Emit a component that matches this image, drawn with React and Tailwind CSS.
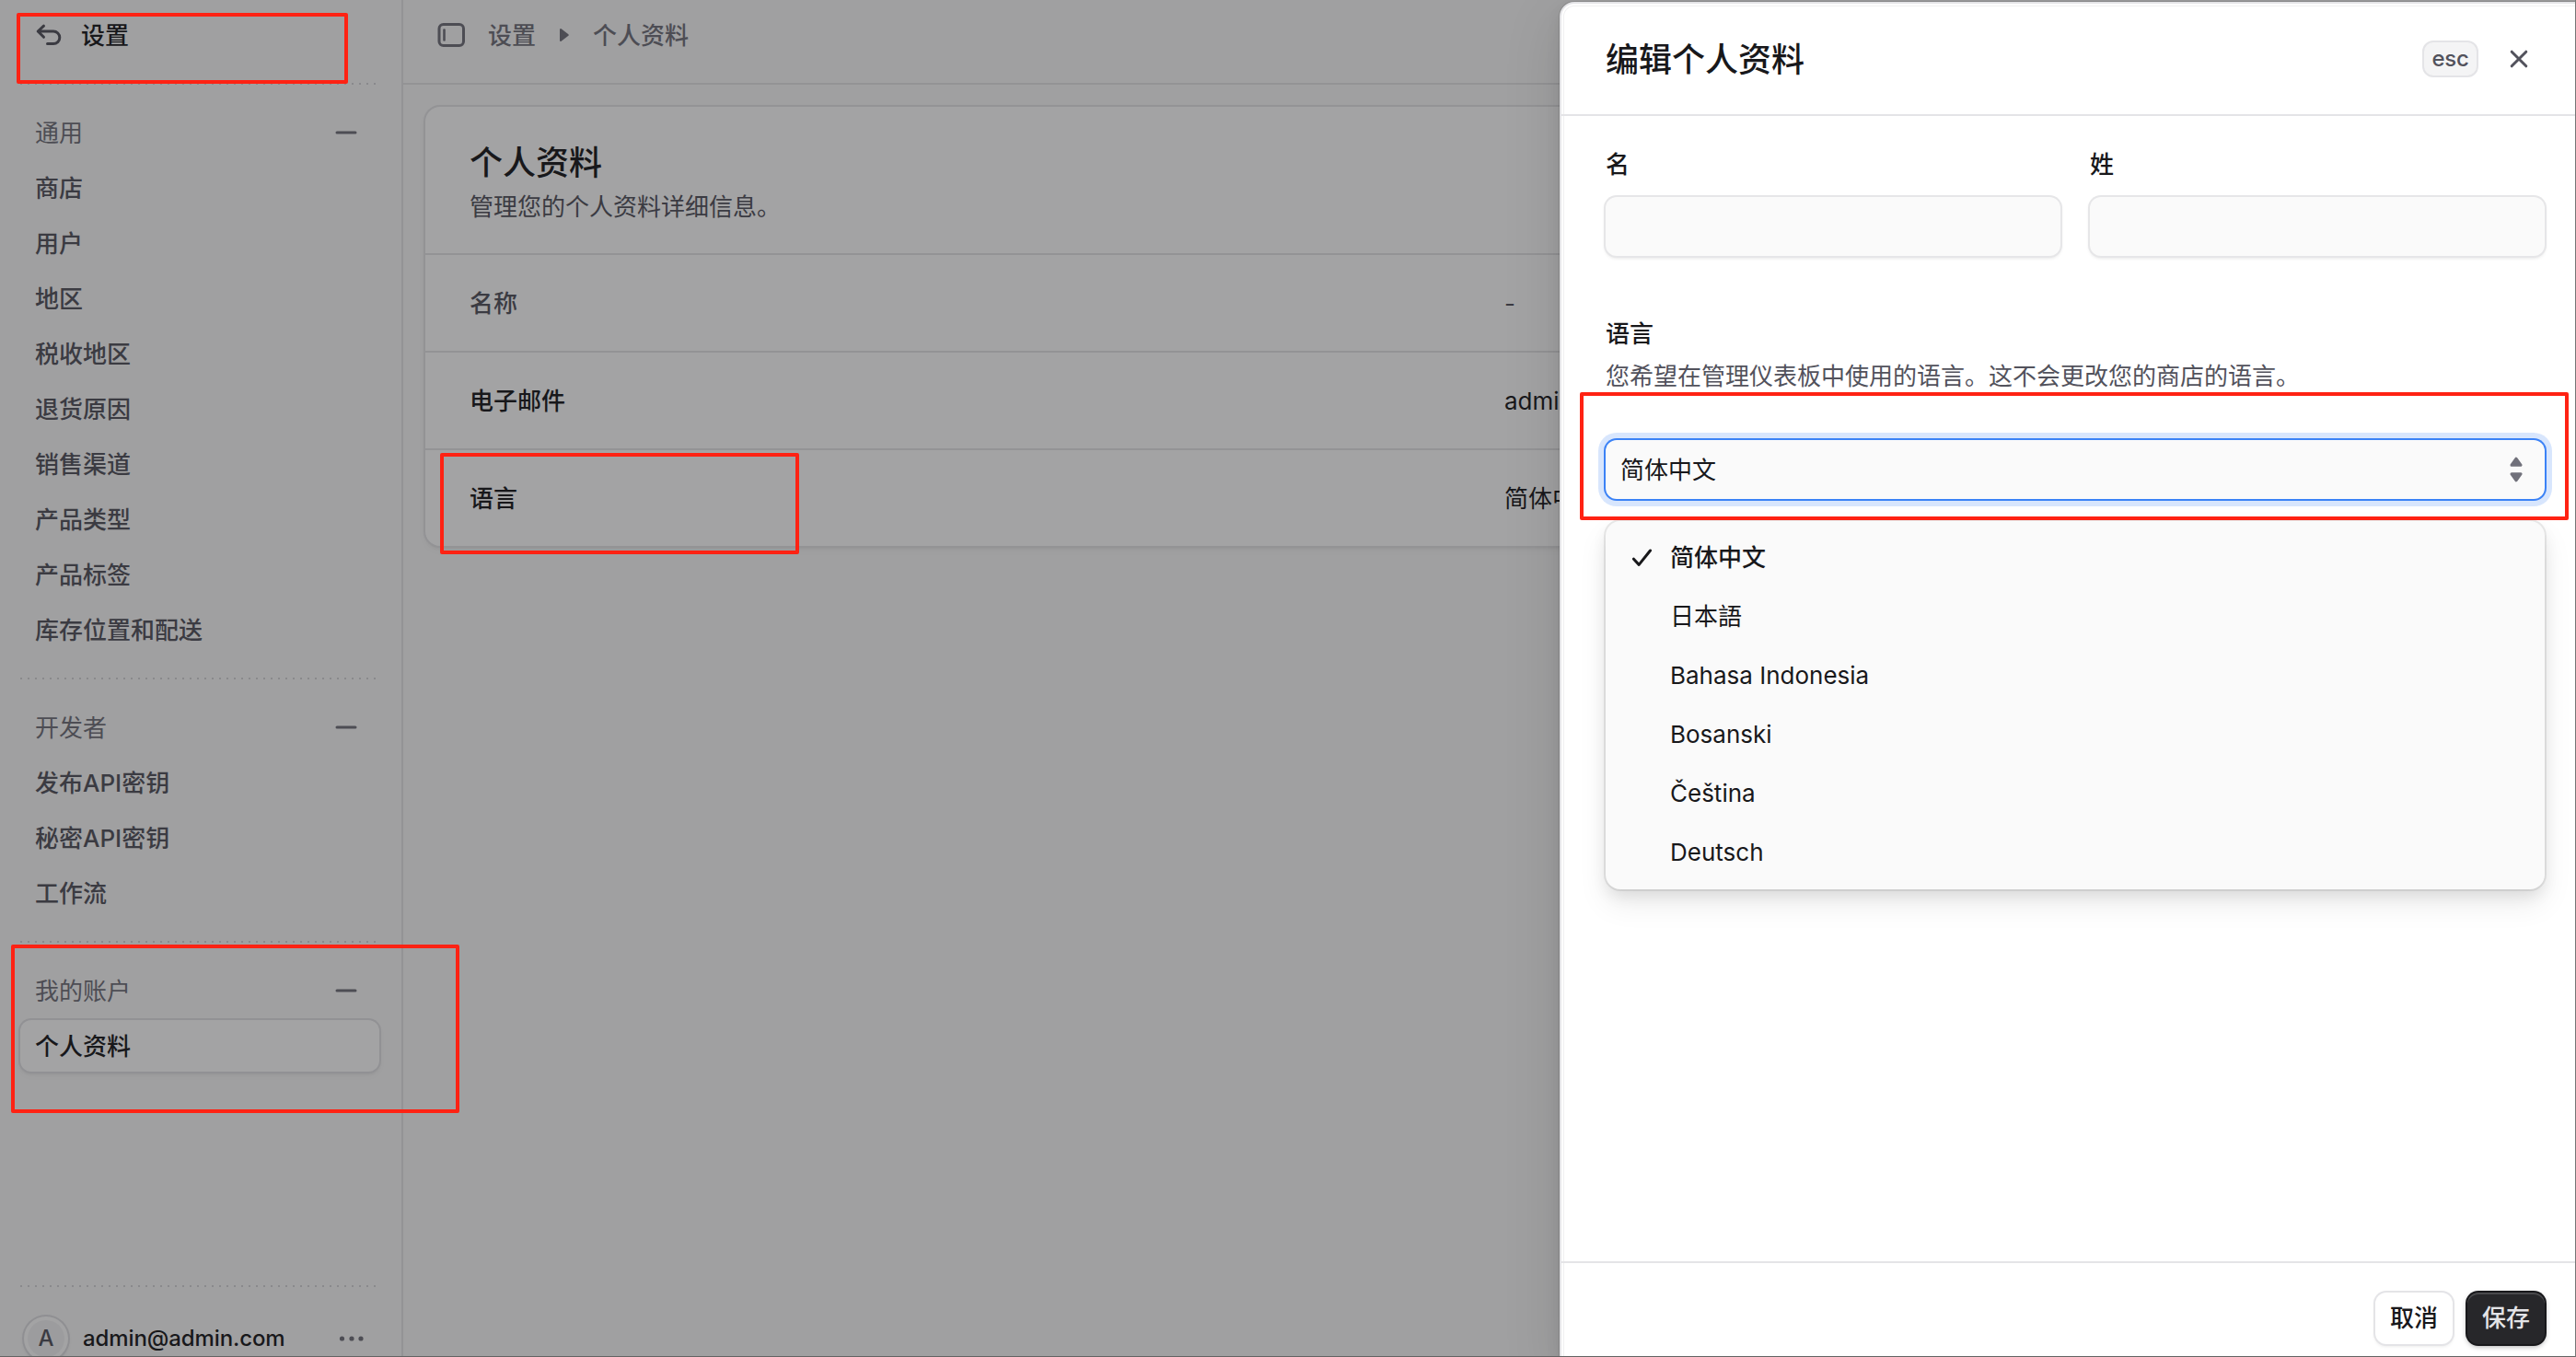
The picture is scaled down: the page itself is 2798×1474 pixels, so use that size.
import React, { useState } from "react";
import clsx from "clsx";

const generalItems = ["商店", "用户", "地区", "税收地区", "退货原因", "销售渠道", "产品类型", "产品标签", "库存位置和配送"];
const developerItems = ["发布API密钥", "秘密API密钥", "工作流"];
const accountItems = ["个人资料"];

const profileRows = [
  { label: "名称", value: "-", muted: true },
  { label: "电子邮件", value: "admin@admin.com" },
  { label: "语言", value: "简体中文" },
];

const languages = ["简体中文", "日本語", "Bahasa Indonesia", "Bosanski", "Čeština", "Deutsch"];

function UndoIcon() {
  return (
    <svg width="28" height="24" viewBox="0 0 28 24" fill="none" stroke="currentColor" strokeWidth="3" strokeLinecap="round" strokeLinejoin="round">
      <path d="M8.5 2.2 2.2 8l6.3 6.3M2.2 8H19a6.8 6.8 0 0 1 0 13.6h-6.5" />
    </svg>
  );
}

function SidebarIcon() {
  return (
    <svg width="32" height="28" viewBox="0 0 32 28" fill="none" stroke="currentColor" strokeWidth="3" strokeLinecap="round">
      <rect x="3" y="2.5" width="26.5" height="23" rx="4.5" />
      <path d="M8.5 8.5v11" strokeWidth="2.6" />
    </svg>
  );
}

function DottedLine() {
  return <div className="h-0.5 w-[388px] shrink-0 bg-[linear-gradient(90deg,#d4d4d8_2px,transparent_2px)] bg-[length:8px_2px]" />;
}

function NavSection({ title, items, active }) {
  return (
    <div className="py-[22px]">
      <div className="flex h-[60px] items-center justify-between pl-4 pr-6 text-zinc-500">
        <span className="pt-0.5">{title}</span>
        <svg width="24" height="24" viewBox="0 0 24 24" stroke="currentColor" strokeWidth="3" strokeLinecap="round">
          <path d="M2 12h20" />
        </svg>
      </div>
      <div className="flex flex-col gap-1 py-0.5">
        {items.map((item) => (
          <div
            key={item}
            className={clsx(
              "flex h-14 items-center rounded-xl px-4 pt-0.5 font-medium",
              item === active
                ? "bg-white text-zinc-900 shadow-[0_0_0_2px_#e2e2e5,0_2px_4px_rgba(0,0,0,0.1),0_4px_10px_rgba(0,0,0,0.03)]"
                : "text-zinc-600"
            )}
          >
            {item}
          </div>
        ))}
      </div>
    </div>
  );
}

function Sidebar() {
  return (
    <aside className="flex h-[1510px] w-[438px] shrink-0 flex-col border-r-2 border-zinc-200 pl-[22px] pr-6">
      <div className="flex h-[90px] shrink-0 items-center gap-[21px] pb-[14px] pl-[17px] text-zinc-600">
        <UndoIcon />
        <span className="pt-0.5 font-medium text-zinc-900">设置</span>
      </div>
      <DottedLine />
      <NavSection title="通用" items={generalItems} />
      <DottedLine />
      <NavSection title="开发者" items={developerItems} />
      <DottedLine />
      <NavSection title="我的账户" items={accountItems} active="个人资料" />
      <div className="mt-auto">
        <DottedLine />
        <div className="flex h-28 items-center">
          <div className="ml-1 flex size-12 items-center justify-center rounded-full bg-white shadow-[0_0_0_2px_#dedee2,0_2px_4px_rgba(0,0,0,0.12)]">
            <div className="flex size-10 items-center justify-center rounded-full bg-zinc-100 text-[24px] font-medium text-zinc-600">A</div>
          </div>
          <span className="ml-4 flex-1 text-[24px] font-medium tracking-[-0.1px] text-zinc-900">admin@admin.com</span>
          <svg width="28" height="8" viewBox="0 0 28 8" fill="currentColor" className="mr-4 text-zinc-500">
            <circle cx="3.5" cy="4" r="2.6" />
            <circle cx="14" cy="4" r="2.6" />
            <circle cx="24" cy="4" r="2.6" />
          </svg>
        </div>
      </div>
    </aside>
  );
}

function ProfileCard() {
  return (
    <section className="rounded-2xl bg-white shadow-[0_0_0_2px_#e4e4e7,0_2px_4px_rgba(0,0,0,0.08),0_4px_10px_rgba(0,0,0,0.04)]">
      <div className="h-[161px] border-b-2 border-zinc-200 px-12 pt-[33px]">
        <h1 className="text-4xl/[56px] font-medium text-zinc-900">个人资料</h1>
        <p className="leading-10 text-zinc-600">管理您的个人资料详细信息。</p>
      </div>
      <div className="divide-y-2 divide-zinc-200">
        {profileRows.map((row) => (
          <div key={row.label} className={clsx("flex h-[106px] items-center px-12 pt-0.5 last:h-[104px]", row.muted ? "text-zinc-600" : "text-zinc-900")}>
            <span className="w-[1124px] shrink-0 font-medium">{row.label}</span>
            <span>{row.value}</span>
          </div>
        ))}
      </div>
    </section>
  );
}

function Field({ label }) {
  return (
    <label className="flex-1 font-medium">
      <span className="block pt-px leading-10">{label}</span>
      <input className="mt-[15px] block h-16 w-full rounded-xl bg-zinc-50 px-4 outline-none shadow-[0_0_0_2px_#e6e6e8,0_2px_4px_rgba(0,0,0,0.14)]" />
    </label>
  );
}

function LanguageSelect({ value, onChange }) {
  return (
    <div>
      <button type="button" className="flex h-16 w-full items-center justify-between rounded-xl bg-zinc-50 pl-4 pr-[23px] shadow-[0_0_0_2px_#3b82f6,0_0_0_8px_rgba(59,130,246,0.2)]">
        <span className="pt-0.5">{value}</span>
        <svg width="16" height="28" viewBox="0 0 16 28" fill="currentColor" stroke="currentColor" strokeWidth="3" strokeLinejoin="round" className="text-zinc-500">
          <path d="M8 2.2 13 9.2H3zM8 25.8 13 18.8H3z" />
        </svg>
      </button>
      <ul className="mt-6 rounded-2xl bg-zinc-50 p-2 shadow-[0_0_0_2px_rgba(0,0,0,0.08),0_8px_16px_rgba(0,0,0,0.08),0_16px_32px_rgba(0,0,0,0.08)]">
        {languages.map((lang) => (
          <li key={lang} onClick={() => onChange(lang)} className={clsx("flex h-16 items-center pl-5", lang === value && "font-medium")}>
            <span className="flex w-[42px]">
              {lang === value && (
                <svg width="24" height="24" viewBox="0 0 24 24" fill="none" stroke="currentColor" strokeWidth="3" strokeLinecap="round" strokeLinejoin="round">
                  <path d="M2.5 13.2 8.2 19.4 20.5 4" />
                </svg>
              )}
            </span>
            {lang}
          </li>
        ))}
      </ul>
    </div>
  );
}

function EditDrawer() {
  const [language, setLanguage] = useState("简体中文");

  return (
    <div className="absolute left-[1694px] top-0.5 flex h-[1488px] w-[1120px] flex-col rounded-2xl border-2 border-zinc-200 bg-white text-zinc-900 shadow-[inset_0_0_0_2px_#fff,inset_0_0_0_3px_#f0f0f1,0_0_0_1px_rgba(0,0,0,0.1),0_8px_16px_rgba(0,0,0,0.08),0_16px_64px_rgba(0,0,0,0.12)]">
      <div className="flex h-[122px] shrink-0 items-center border-b-2 border-zinc-200 pl-12">
        <h2 className="flex-1 pt-0.5 text-4xl font-medium">编辑个人资料</h2>
        <kbd className="flex h-10 w-[61px] items-center justify-center rounded-xl border-2 border-zinc-200 bg-zinc-100 font-['Inter','Noto_Sans_CJK_SC',sans-serif] text-[24px] font-medium tracking-[-0.3px] text-zinc-600">esc</kbd>
        <svg width="20" height="20" viewBox="0 0 20 20" stroke="currentColor" strokeWidth="3" strokeLinecap="round" className="ml-[34px] mr-[66px] text-zinc-600">
          <path d="m2.2 2.2 15.6 15.6M17.8 2.2 2.2 17.8" />
        </svg>
      </div>
      <div className="flex-1 px-12 pt-8">
        <div className="flex gap-8">
          <Field label="名" />
          <Field label="姓" />
        </div>
        <div className="pt-[65px]">
          <div className="leading-10 font-medium">语言</div>
          <p className="mb-[49px] mt-1.5 leading-10 text-zinc-600">您希望在管理仪表板中使用的语言。这不会更改您的商店的语言。</p>
          <LanguageSelect value={language} onChange={setLanguage} />
        </div>
      </div>
      <div className="flex h-[118px] shrink-0 items-start justify-end gap-4 border-t-2 border-zinc-200 pr-12 pt-8 font-medium">
        <button type="button" className="h-14 rounded-xl bg-white px-4 shadow-[0_0_0_2px_#e4e4e7,0_2px_4px_rgba(0,0,0,0.12)]">取消</button>
        <button type="button" className="h-14 rounded-xl bg-zinc-800 px-4 text-zinc-200 shadow-[0_0_0_2px_#18181b,inset_0_2px_0_rgba(255,255,255,0.16),0_2px_6px_rgba(0,0,0,0.4)]">保存</button>
      </div>
    </div>
  );
}

export default function App() {
  return (
    <div className="relative flex h-[1474px] w-full items-start overflow-hidden bg-zinc-50 font-['Inter','Noto_Sans_CJK_SC',sans-serif] text-[26px] leading-10">
      <Sidebar />
      <main className="flex-1">
        <header className="flex h-[92px] items-center border-b-2 border-zinc-200 pb-[14px] pl-9 text-zinc-500">
          <SidebarIcon />
          <span className="ml-6 pt-0.5 font-medium">设置</span>
          <svg width="12" height="16" viewBox="0 0 12 16" fill="currentColor" stroke="currentColor" strokeWidth="2" strokeLinejoin="round" className="mx-[25px]">
            <path d="M2 2v12l7.8-6z" />
          </svg>
          <span className="pt-0.5 font-medium">个人资料</span>
        </header>
        <div className="px-6 pt-6">
          <ProfileCard />
        </div>
      </main>

      {/* Overlay */}
      <div className="absolute inset-0 bg-zinc-900/40" />
      <EditDrawer />

      {/* Window edges */}
      <div className="absolute inset-x-0 bottom-0 h-px bg-[#636363]" />
      <div className="absolute inset-y-0 right-0 w-px bg-[#757575]" />

      {/* Highlight boxes */}
      <div className="absolute left-[18px] top-[14px] h-[77px] w-[360px] rounded-xs border-4 border-[#ff2213]" />
      <div className="absolute left-3 top-[1026px] h-[183px] w-[487px] rounded-xs border-4 border-[#ff2213]" />
      <div className="absolute left-[478px] top-[492px] h-[110px] w-[390px] rounded-xs border-4 border-[#ff2213]" />
      <div className="absolute left-[1716px] top-[426px] h-[139px] w-[1074px] rounded-xs border-4 border-[#ff2213]" />
    </div>
  );
}
